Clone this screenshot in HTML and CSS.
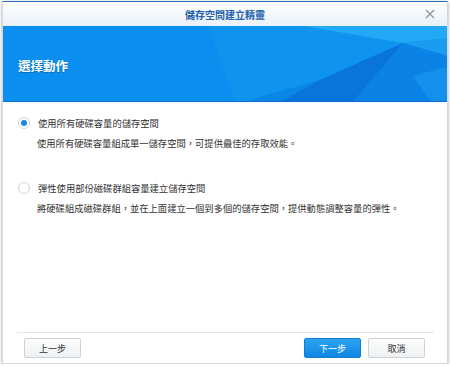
FILE: index.html
```html
<!DOCTYPE html>
<html lang="zh-Hant">
<head>
    <meta charset="UTF-8">
    <title>儲存空間建立精靈</title>
    <link rel="stylesheet" href="styles.css">
</head>
<body>
    <div class="dialog">
        <div class="titlebar">
            <span class="title">儲存空間建立精靈</span>
            <svg class="close" width="10" height="10" viewBox="0 0 10 10">
                <path d="M1 1 L9 9 M9 1 L1 9" stroke="#8d959c" stroke-width="1.2" fill="none"/>
            </svg>
        </div>

        <div class="banner">
            <svg class="banner-art" width="446" height="76" viewBox="0 0 446 76" preserveAspectRatio="none">
                <polygon points="205,0 300,0 400,17 317,54 240,76 232,76" fill="#0e94ef"/>
                <polygon points="300,0 446,0 446,12 400,17" fill="#22a8f4"/>
                <polygon points="400,17 317,54 277,76 350,76" fill="#0874dc"/>
                <polygon points="400,17 446,30 446,76 350,76" fill="#0b82e6"/>
                <polygon points="400,17 446,12 446,30" fill="#1a9cf0"/>
                <polygon points="410,50 446,40 446,76 428,76" fill="#1390ec"/>
                <polygon points="317,54 240,76 277,76" fill="#0a86e7"/>
            </svg>
            <h1 class="heading">選擇動作</h1>
        </div>

        <div class="content">
            <div class="option">
                <div class="option-row">
                    <span class="radio checked"></span>
                    <span class="label">使用所有硬碟容量的儲存空間</span>
                </div>
                <div class="desc">使用所有硬碟容量組成單一儲存空間，可提供最佳的存取效能。</div>
            </div>
            <div class="option">
                <div class="option-row">
                    <span class="radio"></span>
                    <span class="label">彈性使用部份磁碟群組容量建立儲存空間</span>
                </div>
                <div class="desc">將硬碟組成磁碟群組，並在上面建立一個到多個的儲存空間，提供動態調整容量的彈性。</div>
            </div>
        </div>

        <div class="footer">
            <button class="btn">上一步</button>
            <div class="right-buttons">
                <button class="btn primary">下一步</button>
                <button class="btn">取消</button>
            </div>
        </div>
    </div>
</body>
</html>
```

FILE: styles.css
```css
body {
    margin: 0;
    background-color: #ffffff;
    font-family: "Noto Sans CJK TC", "Noto Sans", sans-serif;
}

.dialog {
    margin: 1px 2px 0 2px;
    width: 444px;
    height: 361px;
    border: 1px solid #d3d8dd;
    border-top: 1px solid #2b6cb3;
    background-color: white;
    box-shadow: 0 1px 3px rgba(0,0,0,0.35);
    display: flex;
    flex-direction: column;
}

.titlebar {
    height: 24px;
    background: linear-gradient(#fdfeff, #eaf1f8);
    display: flex;
    align-items: center;
    justify-content: center;
    position: relative;
}

.title {
    font-size: 10px;
    font-weight: bold;
    color: #1f62ad;
}

.close {
    position: absolute;
    right: 12px;
    top: 7px;
}

.banner {
    height: 76px;
    background-color: #0a8eef;
    border-bottom: 1px solid #0a6fd0;
    box-sizing: border-box;
    position: relative;
    display: flex;
    align-items: center;
    overflow: hidden;
}

.banner-art {
    position: absolute;
    left: 0;
    top: 0;
}

.heading {
    position: relative;
    margin: 4px 0 0 15px;
    font-size: 12.5px;
    font-weight: bold;
    color: white;
    text-shadow: 0 1px 1px rgba(0,0,0,0.25);
}

.content {
    flex: 1;
    padding: 14px 0 0 15px;
    font-size: 9.3px;
    color: #333;
}

.option {
    margin-bottom: 31px;
}

.option-row {
    display: flex;
    align-items: center;
    height: 14px;
}

.radio {
    width: 10px;
    height: 10px;
    border: 1px solid #cfd4d9;
    border-radius: 50%;
    background-color: white;
    margin-right: 8px;
    display: flex;
    align-items: center;
    justify-content: center;
}

.radio.checked::after {
    content: "";
    width: 6px;
    height: 6px;
    border-radius: 50%;
    background-color: #1a86e3;
}

.desc {
    margin: 6px 0 0 19px;
    line-height: 14px;
}

.footer {
    margin: 0 13px 0 14px;
    border-top: 1px solid #e4e7ea;
    padding: 5px 9px 5px 7px;
    display: flex;
    justify-content: space-between;
    align-items: center;
}

.right-buttons {
    display: flex;
    gap: 7px;
}

.btn {
    width: 57px;
    height: 20px;
    padding: 0;
    font-family: "Noto Sans CJK TC", sans-serif;
    font-size: 9px;
    color: #333;
    background: linear-gradient(#fdfdfd, #eef0f2);
    border: 1px solid #cbd1d6;
    border-radius: 2px;
}

.btn.primary {
    color: white;
    background: linear-gradient(#2ea3f2, #0e87e2);
    border-color: #0f80d8;
}
```
